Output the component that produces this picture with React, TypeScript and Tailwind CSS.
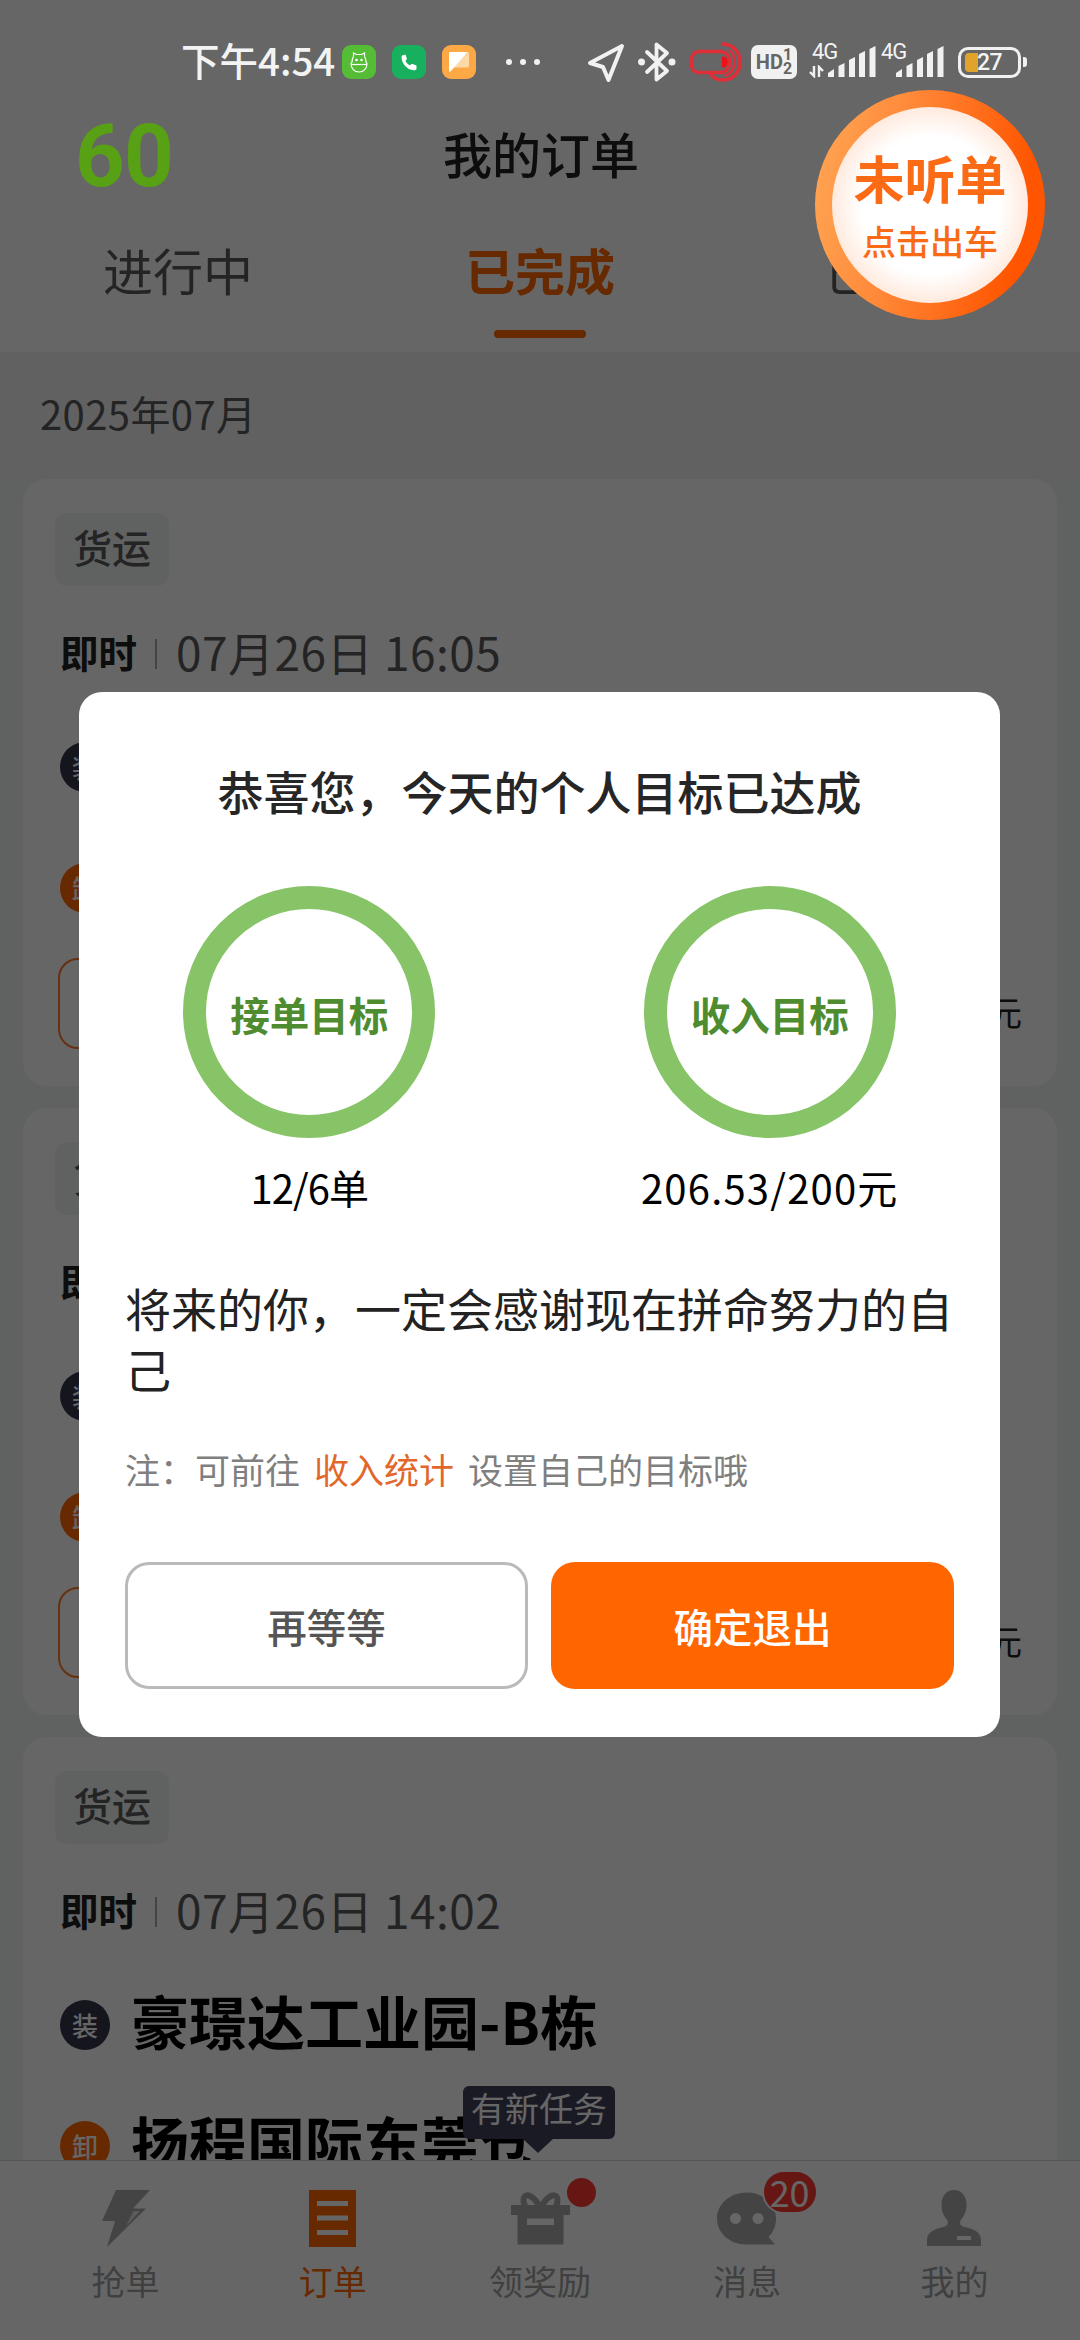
import type { ReactNode } from "react";

const orders = [
	{ id: 1, time: "07月26日 16:05", from: "", to: "" },
	{ id: 2, time: "", from: "", to: "" },
	{ id: 3, time: "07月26日 14:02", from: "豪璟达工业园-B栋", to: "扬程国际东莞仓" },
];

/* STATUS BAR */

function Signal() {
	return (
		<svg width="48" height="32" viewBox="0 0 48 32" fill="#f1f1f1">
			<path d="M0 31v-4l6-4v8z" />
			<path d="M10.500 31V20l6-3v14z" />
			<path d="M21 31V14l6-3v20z" />
			<path d="M31 31V8l6-3v26z" />
			<path d="M41.500 31V3l6-3v31z" />
		</svg>
	);
}

function StatusBar() {
	return (
		<div className="relative flex h-[124px] items-center pl-[181px] text-[#f3f3f3]">
			<span className="-mt-[6px] w-[161px] whitespace-nowrap text-[38.500px] leading-none font-medium">
				下午4:54
			</span>

			{/* app notifications */}
			<div className="flex gap-4">
				<div className="flex size-[34px] items-center justify-center rounded-[9px] bg-[#55bd35]">
					<svg width="18" height="21" viewBox="0 0 18 21" fill="none" stroke="#fff" strokeWidth="1.200">
						<path d="M3.500 4.500V1l3 1.500h5l3-1.500v3.500" />
						<path d="M3.500 4.500C2.500 6 2 8 2 10l-1 1.500C1 16.500 4.500 20 9 20s8-3.500 8-8.500L16 10c0-2-.5-4-1.500-5.500" />
						<path d="M1 12.500h16" />
						<circle cx="6.500" cy="8" r=".7" fill="#fff" />
						<circle cx="11.500" cy="8" r=".7" fill="#fff" />
					</svg>
				</div>
				<div className="flex size-[34px] items-center justify-center rounded-[9px] bg-[#17b05f]">
					<svg width="16" height="17" viewBox="0 0 16 17" fill="#fff">
						<path d="M1 1.500 4.500.5 6 5 4.500 6.800c.9 2 2.400 3.500 4.400 4.500L11 9.800l4.500 1.700v3.500c-.4 1-2 1.500-3 1.300C6 15.500 1 10 .5 3.500z" />
					</svg>
				</div>
				<div className="flex size-[34px] items-center justify-center rounded-[9px] bg-[#fca945]">
					<svg width="20" height="20" viewBox="0 0 20 20">
						<path d="M20 0v14c0 1-.5 1.500-1.500 1.500H4z" fill="#fed9a8" />
						<path d="M0 1.500C0 .5.500 0 1.500 0H19L1.500 19.500C.5 20 0 19.500 0 18.500z" fill="#fff" />
					</svg>
				</div>
			</div>

			<div className="ml-[30px] flex gap-2">
				<i className="size-[6px] rounded-full bg-[#f1f1f1]" />
				<i className="size-[6px] rounded-full bg-[#f1f1f1]" />
				<i className="size-[6px] rounded-full bg-[#f1f1f1]" />
			</div>

			{/* location */}
			<svg className="ml-[47px]" width="40" height="42" viewBox="0 0 40 42" fill="none" stroke="#f1f1f1" strokeWidth="4" strokeLinejoin="round">
				<path d="M35 5 3 22l13 4 5.500 13z" />
			</svg>
			{/* bluetooth */}
			<svg className="ml-[11px]" width="38" height="42" viewBox="0 0 38 42" fill="none" stroke="#f1f1f1" strokeWidth="3.800" strokeLinejoin="round" strokeLinecap="round">
				<path d="M9 11 29 30l-10.500 8.500v-35L29 12 9 31" />
				<circle cx="3.500" cy="21" r="1.600" fill="#f1f1f1" />
				<circle cx="34" cy="21" r="1.600" fill="#f1f1f1" />
			</svg>
			{/* earphone */}
			<svg className="ml-[11px]" width="56" height="42" viewBox="0 0 56 42" fill="none" stroke="#de2f38" strokeWidth="3.600">
				<path d="M35 31.500H12c-5 0-8-4-8-10s3-11 8-11h22" />
				<path d="M33 10.500c6 0 9.500 4.500 9.500 10.500S39 31.500 33 31.500" />
				<path d="M35 3c11 0 18 8 18 18s-7 18-17 18c-6 0-11-3-13-7" />
				<path d="M42 9c4 2.500 5.500 7 5.500 12 0 7-4 12-10 14" strokeWidth="2.500" />
				<path d="M35 15.500v11c4 0 5.500-2 5.500-5.500s-1.500-5.500-5.500-5.500z" fill="#f01018" stroke="none" />
			</svg>

			<div className="ml-[8px] flex h-[34px] w-[46px] items-center justify-center rounded-[7px] bg-[#f1f1f1] text-[#666]">
				<span className="font-[Roboto] text-[20px] leading-none font-bold">HD</span>
				<span className="flex flex-col font-[Roboto] text-[16px] leading-[14px] font-bold">
					<i className="not-italic">1</i>
					<i className="not-italic">2</i>
				</span>
			</div>

			<div className="relative ml-[31px] h-[32px] w-[48px]">
				<Signal />
				<span className="absolute -top-[5px] -left-[16px] font-[Roboto] text-[22px] leading-none tracking-[-1px]">4G</span>
				<svg className="absolute top-[19px] -left-[19px]" width="16" height="13" viewBox="0 0 16 13" fill="none" stroke="#f1f1f1" strokeWidth="2.400">
					<path d="M1 7l4 4V1M10 12V2l4 4" />
				</svg>
			</div>
			<div className="relative ml-[20px] h-[32px] w-[48px]">
				<Signal />
				<span className="absolute -top-[5px] -left-[15px] font-[Roboto] text-[22px] leading-none tracking-[-1px]">4G</span>
			</div>

			<div className="ml-[14px] flex items-center">
				<div className="relative h-[31px] w-[63px] rounded-[10px] border-[3px] border-[#f1f1f1]">
					<div className="absolute top-[3px] left-[4px] h-[19px] w-[13px] rounded-l-[4px] bg-[#e2a32c]" />
					<span className="absolute top-[1px] left-[16px] font-[Roboto] text-[23px] leading-[23px] font-medium tracking-tight">
						27
					</span>
				</div>
				<div className="ml-[2px] h-[10px] w-[4px] rounded-r-[3px] bg-[#f1f1f1]" />
			</div>
		</div>
	);
}

/* ORDER LIST */

function Stop({ label, name, dark }: { label: string; name: string; dark?: boolean }) {
	return (
		<div className="flex h-[58px] items-center gap-[21px]">
			<div
				className={
					dark
						? "flex size-[50px] items-center justify-center rounded-full bg-[#35354d] text-[26px] leading-none font-medium text-white"
						: "flex size-[50px] items-center justify-center rounded-full bg-[#ff6600] text-[26px] leading-none font-medium text-white"
				}
			>
				{label}
			</div>
			<span className="-mt-[11px] text-[58px] leading-[58px] font-bold text-black">{name}</span>
		</div>
	);
}

function OrderCard({ time, from, to }: { time: string; from: string; to: string }) {
	return (
		<div className="h-[607px] shrink-0 rounded-[24px] bg-white pt-[34px] pr-[35px] pl-[35px]">
			<div className="-ml-[3px] flex h-[73px] w-[114px] items-center justify-center rounded-[12px] bg-[#f1f5f4] text-[39px] leading-none font-medium text-[#5a5a5a]">
				<span className="-mt-[6px]">货运</span>
			</div>
			<div className="mt-[43px] ml-[2px] flex h-[50px] items-center">
				<span className="-mt-[6px] text-[38.500px] leading-none font-bold text-[#222]">即时</span>
				<i className="ml-[18px] h-[30px] w-[2px] bg-[#aaa]" />
				<span className="-mt-[7px] ml-[19px] text-[46px] leading-none tracking-[0.500px] text-[#5a5a5a]">{time}</span>
			</div>
			<div className="mt-[59px] ml-[2px] flex flex-col gap-[63px]">
				<Stop label="装" name={from} dark />
				<Stop label="卸" name={to} />
			</div>
			<div className="mt-[41px] flex items-center justify-between">
				<div className="h-[91px] w-[200px] rounded-[20px] border-2 border-[#ff7a2a]" />
				<span className="mt-4 text-[34px] leading-none text-[#222]">元</span>
			</div>
		</div>
	);
}

/* BOTTOM NAV */

function NavItem({ label, active, children }: { label: string; active?: boolean; children: ReactNode }) {
	return (
		<div className="relative flex flex-1 flex-col items-center pt-[29px]">
			<div className="flex h-[57px] items-center justify-center">{children}</div>
			<span className={active ? "mt-[17px] text-[34px] leading-[34px] text-[#ff6600]" : "mt-[17px] text-[34px] leading-[34px] text-[#a0a0a0]"}>
				{label}
			</span>
		</div>
	);
}

function BottomNav() {
	return (
		<nav className="relative flex h-[180px] shrink-0 border-t border-[#d5dad8] bg-white px-[22px]">
			<NavItem label="抢单">
				<svg width="50" height="57" viewBox="0 0 50 57" fill="#aaa">
					<path d="M15 0h34L32 18.500h13L6 57l8-26H1z" />
					<path d="M32.500 21h6.500L25 36z" fill="#e4e4e4" />
				</svg>
			</NavItem>
			<NavItem label="订单" active>
				<svg width="47" height="57" viewBox="0 0 47 57" fill="none" stroke="#fff" strokeWidth="5">
					<path d="M0 0h47v57H0z" fill="#ff6600" stroke="none" />
					<path d="M8 13.500h31M8 28h31M8 42.500h31" />
				</svg>
			</NavItem>
			<NavItem label="领奖励">
				<svg width="60" height="57" viewBox="0 0 60 57" fill="#aaa">
					<path d="M1 15h59v10h-6.500v29.500h-46V25H1z" />
					<path d="M31 19C23 3 13.500 2 13.500 10.500c0 3 1 5 3 6M30 19C38 3 47.500 2 47.500 10.500c0 3-1 5-3 6" fill="none" stroke="#aaa" strokeWidth="6" />
					<path d="M17 28.500h27v6.500H17z" fill="#fff" />
				</svg>
				<i className="absolute top-[17px] left-[131px] size-[29px] rounded-full bg-[#ff3b30]" />
			</NavItem>
			<NavItem label="消息">
				<svg width="60" height="57" viewBox="0 0 60 57" fill="#aaa">
					<path d="M30 2.500c16 0 29 11 29 26 0 8-3 14-7.500 18.500L58 54.500H29C13 54.500 0 43 0 28.500s13-26 30-26z" />
					<circle cx="18.500" cy="28.500" r="5.500" fill="#fff" />
					<circle cx="41" cy="28.500" r="5.500" fill="#fff" />
				</svg>
				<span className="absolute top-[9px] left-[118px] flex h-[44px] w-[56px] items-center justify-center rounded-full border-2 border-white bg-[#ff3b30] pb-[3px] text-[36px] leading-none text-white">
					20
				</span>
			</NavItem>
			<NavItem label="我的">
				<svg width="54" height="57" viewBox="0 0 54 57" fill="#aaa">
					<path d="M27 0c7.500 0 12.500 6 12.500 15 0 7-3 12-6 15.500-1.500 4 1 5.500 4 6.500C47 39 54 42 54 50v6H0v-6c0-8 7-11 16.500-13 3-1 5.500-2.500 4-6.500-3-3.500-6-8.500-6-15.500C14.500 6 19.500 0 27 0z" />
					<path d="M30 46h14v4H30z" fill="#fff" />
				</svg>
			</NavItem>

			{/* new task tooltip */}
			<div className="absolute -top-[75px] left-[463px] flex h-[53px] w-[152px] items-center justify-center rounded-[6px] bg-[#43435c] text-[34px] leading-none text-white">
				<span className="-mt-[10px]">有新任务</span>
				<svg className="absolute -bottom-[14px] left-[59px]" width="32" height="15" viewBox="0 0 32 15" fill="#43435c">
					<path d="M0 0h32L16 15z" />
				</svg>
			</div>
		</nav>
	);
}

/* GOAL DIALOG */

function Goal({ label, children }: { label: string; children: ReactNode }) {
	return (
		<div className="flex flex-col items-center">
			<div className="flex size-[252px] items-center justify-center rounded-full border-[23px] border-[#87c367] text-[39.500px] leading-none font-bold text-[#4f8c2f]">
				<span className="mt-[4px]">{label}</span>
			</div>
			{children}
		</div>
	);
}

function GoalDialog() {
	return (
		<div className="h-[1045px] w-[921px] rounded-[23px] bg-white pt-[75px]">
			<h2 className="text-center text-[46px] leading-[46px] font-medium text-[#262626]">
				恭喜您，今天的个人目标已达成
			</h2>
			<div className="mt-[73px] grid grid-cols-2">
				<Goal label="接单目标">
					<span className="mt-[29px] text-[40px] leading-[40px] tracking-[-1px] text-black">12/6单</span>
				</Goal>
				<Goal label="收入目标">
					<span className="mt-[29px] text-[40px] leading-[40px] tracking-[1.200px] text-black">206.53/200元</span>
				</Goal>
			</div>
			<p className="mt-[70px] px-[46px] text-[46px] leading-[61px] text-[#222]">
				将来的你，一定会感谢现在拼命努力的自己
			</p>
			<p className="mt-[50px] px-[46px] text-[35px] leading-[40px] whitespace-nowrap text-[#7f7f7f]">
				注：可前往<span className="mx-[14px] text-[#e2672a]">收入统计</span>设置自己的目标哦
			</p>
			<div className="mt-[73px] grid grid-cols-2 gap-[23px] px-[46px]">
				<button className="h-[127px] rounded-[24px] border-[3px] border-[#bababa] text-[39.500px] leading-none font-medium text-[#555]">
					再等等
				</button>
				<button className="h-[127px] rounded-[24px] bg-[#ff6600] text-[39.500px] leading-none font-medium text-white">
					确定退出
				</button>
			</div>
		</div>
	);
}

export default function App() {
	return (
		<div className="relative h-[2340px] w-[1080px] overflow-hidden bg-[#eff5f2] font-['Noto_Sans_CJK_SC',sans-serif]">
			<div className="flex h-full flex-col">
				{/* HEADER */}
				<header className="shrink-0 bg-white pt-[123px]">
					<h1 className="pl-[2px] text-center text-[49px] leading-[60px] font-medium text-[#222]">我的订单</h1>
					<div className="grid h-[169px] grid-cols-3 pt-[61px] text-center text-[50px] leading-[50px] text-[#5a5a5a]">
						<span className="pr-1">进行中</span>
						<div className="flex flex-col items-center font-bold text-[#ff6600]">
							已完成
							<i className="mt-[36px] h-[8px] w-[92px] rounded-full bg-[#ff6600]" />
						</div>
						<span>已取消</span>
					</div>
				</header>

				{/* ORDERS */}
				<main className="flex-1 overflow-hidden">
					<div className="flex h-[127px] items-center bg-[#f2f2f2] pb-[6px] pl-[40px] text-[40px] leading-none tracking-[0.400px] text-[#5a5a5a]">
						2025年07月
					</div>
					<div className="flex flex-col gap-[22px] px-[23px]">
						{orders.map((order) => (
							<OrderCard key={order.id} time={order.time} from={order.from} to={order.to} />
						))}
					</div>
				</main>

				<BottomNav />
			</div>

			{/* OVERLAY */}
			<div className="absolute inset-0 flex flex-col bg-black/60">
				<StatusBar />
				<div className="mt-[568px] ml-[79px]">
					<GoalDialog />
				</div>
			</div>

			{/* fps counter */}
			<span className="absolute top-[113px] left-[75px] font-[Roboto,sans-serif] text-[87px] leading-[87px] font-bold tracking-[-1px] text-[#58a014]">
				60
			</span>

			{/* floating listen button */}
			<div className="absolute top-[90px] left-[815px] flex size-[230px] items-center justify-center rounded-full bg-[linear-gradient(100deg,#ffa755_0%,#ff8a3a_35%,#ff5500_85%)]">
				<div className="flex size-[196px] flex-col items-center rounded-full bg-[radial-gradient(circle,#ffffff_50%,#ffe9dc_72%)] pt-[45px] text-[#fb6a14]">
					<span className="text-[51px] leading-[51px] font-bold">未听单</span>
					<span className="mt-[21px] text-[34px] leading-[34px] font-medium">点击出车</span>
				</div>
			</div>
		</div>
	);
}
